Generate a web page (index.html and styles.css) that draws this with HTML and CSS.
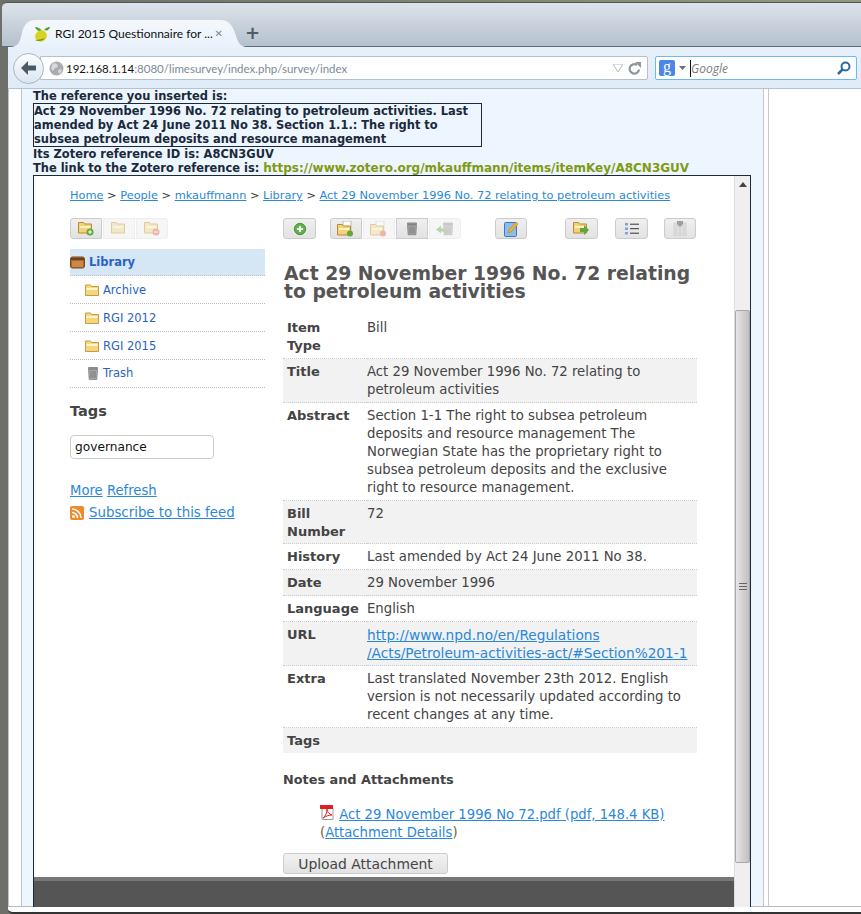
FILE: index.html
```html
<!DOCTYPE html>
<html lang="en">
<head>
    <meta charset="UTF-8">
    <meta name="viewport" content="width=device-width, initial-scale=1.0">
    <title>RGI 2015 Questionnaire</title>
    <link rel="stylesheet" href="styles.css">
</head>
<body>
    <div class="window">
        <!-- Tab strip -->
        <div class="tabstrip">
            <div class="tab">
                <svg class="favicon" width="18" height="18" viewBox="0 0 18 18"><path d="M11 5c3-3 5-3 6-3-1 3-3 4-6 3z" fill="#4f9a1e"/><path d="M9 6C7 3 5 2 2 2c1 3 4 5 7 4z" fill="#5aa626"/><ellipse cx="8" cy="11" rx="6" ry="5.500" transform="rotate(-30 8 11)" fill="#d6d420"/><path d="M2 15c3 2 8 1 10-2-3 1-7 2-10 2z" fill="#6d9a12"/></svg>
                <span class="tab-title">RGI 2015 Questionnaire for ...</span>
                <span class="tab-close">✕</span>
            </div>
            <span class="tab-new">+</span>
        </div>

        <!-- Navigation bar -->
        <div class="navbar">
            <div class="back-btn">
                <svg width="16" height="14" viewBox="0 0 16 14"><path d="M7 0L0 7l7 7V9.500h8v-5H7z" fill="#4c5a68"/></svg>
            </div>
            <div class="urlbar">
                <svg class="globe" width="15" height="15" viewBox="0 0 15 15"><circle cx="7.500" cy="7.500" r="7" fill="#a9adb1"/><path d="M4 2l4 1 1 3-3 1-2 3-2-3zM10 8l3 1-2 4-2-2z" fill="#d7d9db"/></svg>
                <span class="url"><span class="url-host">192.168.1.14</span>:8080/limesurvey/index.php/survey/index</span>
                <svg class="url-drop" width="10" height="8" viewBox="0 0 10 8"><path d="M0 0h10L5 8z" fill="#fff" stroke="#b5bcc4"/></svg>
                <svg class="url-reload" width="13" height="13" viewBox="0 0 13 13"><path d="M11 7.500A4.700 4.700 0 1 1 9 3" fill="none" stroke="#8b969f" stroke-width="2.200"/><path d="M7 0h6v6z" fill="#8b969f"/></svg>
            </div>
            <div class="searchbar">
                <span class="engine">g</span>
                <svg class="engine-drop" width="7" height="4" viewBox="0 0 7 4"><path d="M0 0h7L3.500 4z" fill="#66717c"/></svg>
                <span class="caret"></span>
                <span class="search-hint">Google</span>
                <svg class="search-go" width="14" height="14" viewBox="0 0 14 14"><circle cx="8.500" cy="5.500" r="4" fill="none" stroke="#2f6a9c" stroke-width="2"/><path d="M5.500 8.500L1 13" stroke="#2f6a9c" stroke-width="2.500"/></svg>
            </div>
        </div>

        <div class="viewport">
            <div class="gutter"></div>
            <div class="survey">
                <div class="survey-text">
                    <div>The reference you inserted is:</div>
                    <div class="ref-box">Act 29 November 1996 No. 72 relating to petroleum activities. Last amended by Act 24 June 2011 No 38. Section 1.1.: The right to subsea petroleum deposits and resource management</div>
                    <div>Its Zotero reference ID is: A8CN3GUV</div>
                    <div>The link to the Zotero reference is: <a class="zotero-link" href="#">https://www.zotero.org/mkauffmann/items/itemKey/A8CN3GUV</a></div>
                </div>

                <!-- Embedded Zotero page -->
                <div class="frame">
                    <div class="frame-page">
                        <div class="frame-scroll">
                            <div class="crumbs"><a href="#">Home</a> &gt; <a href="#">People</a> &gt; <a href="#">mkauffmann</a> &gt; <a href="#">Library</a> &gt; <a href="#">Act 29 November 1996 No. 72 relating to petroleum activities</a></div>
                            <div class="columns">
                                <aside class="sidebar">
                                    <div class="btn-group side-tools">
                                        <span class="tool on"><svg width="16" height="15" viewBox="0 0 16 15"><use href="#ico-folder"/><circle cx="12" cy="11" r="3.500" fill="#5ea83c"/><path d="M10 11h4M12 9v4" stroke="#fff"/></svg></span>
                                        <span class="tool faded"><svg width="16" height="15" viewBox="0 0 16 15"><use href="#ico-folder"/></svg></span>
                                        <span class="tool faded"><svg width="16" height="15" viewBox="0 0 16 15"><use href="#ico-folder"/><circle cx="12" cy="11" r="3.500" fill="#d9593f"/><path d="M10 11h4" stroke="#fff"/></svg></span>
                                    </div>
                                    <ul class="collections">
                                        <li class="library"><svg width="15" height="13" viewBox="0 0 15 13"><rect x=".5" y="1" width="14" height="11" rx="2" fill="#a9672b" stroke="#7c4a1d"/><rect x="1" y="2" width="13" height="2" fill="#6d431d"/><rect x="2" y="5" width="11" height="6" fill="#c98a48"/></svg>Library</li>
                                        <li><svg width="14" height="12" viewBox="0 0 14 12"><use href="#ico-folder-s"/></svg>Archive</li>
                                        <li><svg width="14" height="12" viewBox="0 0 14 12"><use href="#ico-folder-s"/></svg>RGI 2012</li>
                                        <li><svg width="14" height="12" viewBox="0 0 14 12"><use href="#ico-folder-s"/></svg>RGI 2015</li>
                                        <li class="trash"><svg width="10" height="14" viewBox="2 0 10 14"><use href="#ico-trash"/></svg>Trash</li>
                                    </ul>
                                    <h3 class="tags-title">Tags</h3>
                                    <input class="tag-input" type="text" value="governance">
                                    <div class="tag-links"><a href="#">More</a> <a href="#">Refresh</a></div>
                                    <div class="feed">
                                        <svg width="14" height="14" viewBox="0 0 14 14"><rect width="14" height="14" rx="2" fill="#f08a2c"/><circle cx="3.500" cy="10.500" r="1.500" fill="#fff"/><path d="M2 6.500a5.500 5.500 0 0 1 5.500 5.500M2 3a9 9 0 0 1 9 9" fill="none" stroke="#fff" stroke-width="1.500"/></svg>
                                        <a href="#">Subscribe to this feed</a>
                                    </div>
                                </aside>

                                <main class="item">
                                    <div class="item-tools">
                                        <span class="tool-solo on"><svg width="14" height="14" viewBox="0 0 16 16"><circle cx="8" cy="8" r="6.500" fill="#62b04a" stroke="#3f8c2d"/><path d="M4.500 8h7M8 4.500v7" stroke="#fff" stroke-width="2"/></svg></span>
                                        <div class="btn-group group-a">
                                            <span class="tool on"><svg width="18" height="16" viewBox="0 0 18 16"><rect x="6" y="0" width="8" height="10" fill="#fff" stroke="#b6bcc4"/><use href="#ico-folder" y="2"/><circle cx="13" cy="12.500" r="3" fill="#5ea83c"/></svg></span>
                                            <span class="tool faded"><svg width="18" height="16" viewBox="0 0 18 16"><rect x="6" y="0" width="8" height="10" fill="#fff" stroke="#b6bcc4"/><use href="#ico-folder" y="2"/><circle cx="13" cy="12.500" r="3" fill="#d9593f"/></svg></span>
                                            <span class="tool on"><svg width="14" height="15" viewBox="0 0 14 14"><use href="#ico-trash"/></svg></span>
                                            <span class="tool faded"><svg width="18" height="15" viewBox="0 0 18 14"><use href="#ico-trash" x="5"/><path d="M0 8l5-4v3c4 0 6 2 6 6-2-3-3-3-6-3v2z" fill="#5ea83c"/></svg></span>
                                        </div>
                                        <span class="tool-solo edit-tool"><svg width="15" height="16" viewBox="0 0 15 16"><rect x=".5" y="1.500" width="12" height="14" rx="1" fill="#8fbdea" stroke="#3b78c4"/><path d="M4 12l1-3 7-8 2 2-7 8z" fill="#f0b43a" stroke="#b67d1c" stroke-width=".6"/></svg></span>
                                        <span class="tool-solo move-tool"><svg width="17" height="15" viewBox="0 0 17 15"><use href="#ico-folder"/><path d="M7 7h4V4l5 5-5 5v-3H7z" fill="#5ea83c"/></svg></span>
                                        <span class="tool-solo list-tool"><svg width="14" height="12" viewBox="0 0 14 12"><g fill="#7fa6dc"><rect width="3" height="2.500"/><rect y="4.500" width="3" height="2.500"/><rect y="9" width="3" height="2.500"/></g><path d="M5 1.200h9M5 5.700h9M5 10.200h9" stroke="#333"/></svg></span>
                                        <span class="tool-solo cite-tool"><svg width="14" height="15" viewBox="0 0 14 15"><path d="M1 2h12v13h-3V5H8v10H6V5H4v10H1z" fill="#d9d9d9" stroke="#bbb" stroke-width=".5"/><path d="M4 0h6v3L7 6 4 3z" fill="#8b8b8b"/></svg></span>
                                    </div>

                                    <h1 class="item-title">Act 29 November 1996 No. 72 relating to petroleum activities</h1>

                                    <table class="fields">
                                        <tr><th>Item<br>Type</th><td>Bill</td></tr>
                                        <tr class="alt"><th>Title</th><td>Act 29 November 1996 No. 72 relating to petroleum activities</td></tr>
                                        <tr><th>Abstract</th><td>Section 1-1 The right to subsea petroleum deposits and resource management The Norwegian State has the proprietary right to subsea petroleum deposits and the exclusive right to resource management.</td></tr>
                                        <tr class="alt tight"><th>Bill Number</th><td>72</td></tr>
                                        <tr><th>History</th><td>Last amended by Act 24 June 2011 No 38.</td></tr>
                                        <tr class="alt"><th>Date</th><td>29 November 1996</td></tr>
                                        <tr><th>Language</th><td>English</td></tr>
                                        <tr class="alt"><th>URL</th><td class="url-cell"><a href="#">http://www.npd.no/en/Regulations<br>/Acts/Petroleum-activities-act/#Section%201-1</a></td></tr>
                                        <tr><th>Extra</th><td>Last translated November 23th 2012. English version is not necessarily updated according to recent changes at any time.</td></tr>
                                        <tr class="alt"><th>Tags</th><td></td></tr>
                                    </table>

                                    <h3 class="notes-title">Notes and Attachments</h3>
                                    <div class="attachment">
                                        <div><svg width="14" height="15" viewBox="0 0 14 15"><path d="M2 .5h8l3 3v11H2z" fill="#fff" stroke="#9a9a9a"/><rect x="0" y="0" width="13" height="4" fill="#e01f26"/><path d="M3 13c3-2 4-6 4-9 0 3 2 5 5 6-3 0-6 1-9 3z" fill="none" stroke="#e01f26"/></svg> <a href="#">Act 29 November 1996 No 72.pdf (pdf, 148.4 KB)</a></div>
                                        <div>(<a href="#">Attachment Details</a>)</div>
                                    </div>
                                    <button class="upload" type="button">Upload Attachment</button>
                                </main>
                            </div>
                        </div>
                        <div class="frame-footer"></div>
                    </div>
                    <div class="scrollbar">
                        <span class="scroll-up"></span>
                        <div class="scroll-thumb"><span class="grip"></span></div>
                    </div>
                </div>
            </div>
            <div class="rightside"></div>
        </div>
        <div class="window-foot"></div>
    </div>

    <!-- Shared icons -->
    <svg class="defs" width="0" height="0">
        <symbol id="ico-folder" viewBox="0 0 16 15" width="16" height="15"><path d="M.5 1.500h5l1 1.500h7v9H.5z" fill="#f3d27a" stroke="#b98d2f"/><rect x="2" y="5" width="10" height="2" fill="#fff3c4"/></symbol>
        <symbol id="ico-folder-s" viewBox="0 0 14 12" width="14" height="12"><path d="M.5 1h5l1 1.500h7v9H.5z" fill="#f5d778" stroke="#c79b4b"/><rect x="1.500" y="4" width="11" height="2" fill="#fff6cf"/></symbol>
        <symbol id="ico-trash" viewBox="0 0 14 14" width="14" height="14"><rect x="2" y="1" width="10" height="2.500" rx="1" fill="#8c8c8c"/><path d="M2.500 3.500h9l-.7 10H3.200z" fill="#a8a8a8" stroke="#777" stroke-width=".7"/><path d="M5 5v7M7 5v7M9 5v7" stroke="#6e6e6e" stroke-width=".8"/></symbol>
    </svg>
</body>
</html>
```
FILE: styles.css
```css
* {
    box-sizing: border-box;
}

html,
body {
    margin: 0;
    padding: 0;
    height: 100%;
    overflow: hidden;
}

body {
    background-color: #8b8f8c;
    font-family: "DejaVu Sans", Verdana, sans-serif;
    color: #333;
}

a {
    color: #2b87d8;
}

.defs {
    display: block;
}

.window {
    height: 914px;
    padding: 2px 0 0 2px;
    background: linear-gradient(90deg, #6d6f68, #8e9a7c);
    display: flex;
    flex-direction: column;
}

/* Tab strip */
.tabstrip {
    height: 45px;
    flex: none;
    padding: 17px 0 0 8px;
    border-top: 1px solid #555;
    border-bottom: 1px solid #5e6a75;
    border-radius: 5px 0 0 0;
    background: linear-gradient(#dde3ea, #b4c1ce);
    display: flex;
    align-items: flex-start;
}

.tab {
    width: 237px;
    height: 27px;
    flex: none;
    display: flex;
    align-items: center;
    padding: 0 24px 0 23px;
    clip-path: path("M0 27 C8 27 10 22 12 13 C14 4 18 0 26 0 L210 0 C218 0 222 4 225 13 C228 22 230 27 237 27 Z");
    background: linear-gradient(#f5f8fb, #e8f2fc);
}

.favicon {
    flex: none;
    margin-right: 4px;
}

.tab-title {
    font-family: Lato, sans-serif;
    font-size: 12px;
    color: #111;
    white-space: nowrap;
    flex: 1;
}

.tab-close {
    font-size: 10px;
    font-weight: bold;
    color: #7f8a94;
}

.tab-new {
    margin-left: -2px;
    font-size: 18px;
    font-weight: bold;
    line-height: 25px;
    color: #4f5b66;
}

/* Navigation bar */
.navbar {
    height: 42px;
    flex: none;
    margin-left: 6px;
    display: flex;
    align-items: center;
    padding: 1px 3px 0 5px;
    border-bottom: 1px solid #b4c3d3;
    background: linear-gradient(#e8f1fa, #dfebf7);
}

.back-btn {
    width: 31px;
    height: 31px;
    flex: none;
    z-index: 1;
    display: flex;
    align-items: center;
    justify-content: center;
    border: 1px solid #a9b6c4;
    border-radius: 50%;
    background: linear-gradient(#fbfdff, #dce6f0);
}

.urlbar {
    width: 608px;
    height: 24px;
    margin-left: -4px;
    padding: 0 6px 0 8px;
    display: flex;
    align-items: center;
    border: 1px solid #b3c0cf;
    border-radius: 0 2px 2px 0;
    background-color: #fff;
}

.globe {
    flex: none;
    margin-right: 2px;
}

.url {
    flex: 1;
    font-family: Lato, sans-serif;
    font-size: 11.500px;
    color: #7d8a97;
    white-space: nowrap;
}

.url-host {
    color: #111;
}

.url-drop {
    margin-right: 5px;
}

.searchbar {
    width: 202px;
    height: 24px;
    margin-left: 7px;
    padding: 0 5px 0 3px;
    display: flex;
    align-items: center;
    border: 1px solid #6fb9f2;
    border-radius: 2px;
    background-color: #fff;
}

.engine {
    width: 16px;
    height: 16px;
    flex: none;
    border-radius: 2px;
    background-color: #4a86e8;
    color: #fff;
    font-family: "Liberation Serif", serif;
    font-size: 16px;
    line-height: 13px;
    text-align: center;
}

.engine-drop {
    margin: 0 4px 0 4px;
}

.caret {
    width: 1px;
    height: 17px;
    background-color: #111;
}

.search-hint {
    flex: 1;
    font-family: "Open Sans", sans-serif;
    font-style: italic;
    font-size: 12px;
    color: #7b7b7b;
}

/* Page area */
.viewport {
    height: 818px;
    flex: none;
    margin-left: 6px;
    display: flex;
    border-bottom: 1px solid #b3bac2;
    background-color: #fff;
}

.gutter {
    width: 14px;
    flex: none;
    border-left: 1px solid #c0c4c8;
    border-right: 1px solid #b9c6d4;
}

.survey {
    width: 742px;
    flex: none;
    padding-left: 11px;
    border-right: 1px solid #c8c8c8;
    background-color: #edf5fe;
}

.rightside {
    width: 5px;
    flex: none;
    border-right: 1px solid #c8c8c8;
}

.window-foot {
    height: 7px;
    flex: none;
    margin-left: 6px;
    border-bottom: 2px solid #333;
    border-radius: 0 0 0 5px;
    background-color: #fff;
}

.survey-text {
    font-size: 11.450px;
    font-weight: bold;
    line-height: 14px;
    color: #1a2a3a;
}

.ref-box {
    width: 449px;
    border: 1px solid #1a2a3a;
}

.zotero-link {
    font-size: 12px;
    color: #7f9a14;
    text-decoration: none;
}

/* Embedded page */
.frame {
    width: 718px;
    height: 732px;
    display: flex;
    border-top: 1px solid #1a2a3a;
    border-left: 1px solid #1a2a3a;
    border-right: 1px solid #1a2a3a;
    background-color: #fff;
}

.frame-page {
    width: 700px;
    flex: none;
    display: flex;
    flex-direction: column;
}

.frame-scroll {
    flex: 1;
    min-height: 0;
    padding: 12px 36px 0 36px;
    overflow: hidden;
}

.frame-footer {
    height: 30px;
    flex: none;
    border-top: 4px solid #777;
    background-color: #555;
}

.scrollbar {
    flex: 1;
    position: relative;
    background-color: #efefef;
    border-left: 1px solid #ddd;
}

.scroll-up {
    position: absolute;
    top: 6px;
    left: 4px;
    width: 0;
    height: 0;
    border-left: 4px solid transparent;
    border-right: 4px solid transparent;
    border-bottom: 5px solid #444;
}

.scroll-thumb {
    position: absolute;
    top: 134px;
    left: 0;
    right: 0;
    height: 553px;
    display: flex;
    align-items: center;
    justify-content: center;
    border: 1px solid #a8a8a8;
    border-radius: 2px;
    background: linear-gradient(90deg, #e6e6e6, #c0c0c0);
}

.grip {
    width: 8px;
    height: 7px;
    border-top: 1px solid #666;
    border-bottom: 1px solid #666;
    background: linear-gradient(#666, #666) center / 100% 1px no-repeat;
}

.crumbs {
    font-size: 11.350px;
    line-height: 14px;
    color: #333;
    white-space: nowrap;
}

.columns {
    display: flex;
    margin-top: 16px;
}

/* Sidebar */
.sidebar {
    width: 195px;
    flex: none;
    margin-right: 18px;
    font-size: 11.500px;
}

.btn-group {
    display: flex;
    gap: 1px;
}

.tool,
.tool-solo {
    height: 21px;
    display: flex;
    align-items: center;
    justify-content: center;
    border: 1px solid #ddd;
    background: linear-gradient(#efefef, #e2e2e2);
}

.tool {
    width: 32px;
}

.tool.on {
    border-color: #ccc;
}

.tool.faded {
    background: #f6f6f6;
    border-color: #eee;
}

.tool.faded svg {
    opacity: .4;
}

.btn-group .tool:first-child {
    border-radius: 3px 0 0 3px;
}

.btn-group .tool:last-child {
    border-radius: 0 3px 3px 0;
}

.collections {
    list-style: none;
    margin: 10px 0 0;
    padding: 0;
}

.collections li {
    height: 28px;
    display: flex;
    align-items: center;
    gap: 4px;
    padding-left: 15px;
    color: #2a62c4;
    border-bottom: 1px dotted #bbb;
}

.collections .library {
    height: 27px;
    padding-left: 0;
    background-color: #d5e6f5;
    font-weight: bold;
}

.collections .trash {
    padding-left: 18px;
    gap: 5px;
    padding-bottom: 2px;
}

.tags-title {
    margin: 14px 0 0;
    font-size: 14.500px;
    line-height: 18px;
    color: #444;
}

.tag-input {
    display: block;
    width: 144px;
    height: 24px;
    margin-top: 15px;
    padding: 0 4px;
    border: 1px solid #ccc;
    border-radius: 4px;
    font-family: "DejaVu Sans", sans-serif;
    font-size: 12.200px;
    color: #111;
}

.tag-links {
    margin-top: 23px;
    font-size: 13.200px;
    line-height: 18px;
}

.feed {
    display: flex;
    align-items: center;
    gap: 5px;
    margin-top: 4px;
    font-size: 13.350px;
    line-height: 18px;
}

/* Item pane */
.item {
    width: 414px;
    flex: none;
}

.item-tools {
    display: flex;
    align-items: center;
    height: 21px;
}

.tool-solo {
    width: 33px;
    border-radius: 3px;
    border-color: #ccc;
}

.group-a {
    margin-left: 14px;
}

.edit-tool {
    margin-left: 34px;
    width: 32px;
}

.move-tool {
    margin-left: 38px;
}

.list-tool {
    margin-left: 17px;
}

.cite-tool {
    margin-left: 16px;
    width: 32px;
}

.cite-tool svg {
    opacity: .8;
}

.item-title {
    margin: 26px 0 14px;
    padding-left: 1px;
    font-size: 18.800px;
    line-height: 18px;
    color: #555;
}

.fields {
    width: 414px;
    border-collapse: collapse;
    table-layout: fixed;
    font-size: 13.250px;
    line-height: 18px;
}

.fields th {
    width: 84px;
    padding: 4px 4px 3px;
    font-size: 13px;
    text-align: left;
    vertical-align: top;
    color: #444;
}

.fields td {
    padding: 4px 4px 3px 0;
    vertical-align: top;
    color: #444;
}

.fields td.url-cell {
    font-size: 13.700px;
}

.fields tr {
    border-bottom: 1px dotted #ccc;
}

.fields tr:last-child {
    border-bottom: 0;
}

.fields .alt {
    background-color: #f2f2f2;
}

.fields .tight th,
.fields .tight td {
    padding-bottom: 2px;
}

.notes-title {
    margin: 18px 0 0;
    font-size: 12.850px;
    line-height: 18px;
    color: #444;
}

.attachment {
    margin: 16px 0 0 37px;
    font-size: 13.200px;
    line-height: 18px;
    color: #7a5a2a;
}

.attachment svg {
    margin-right: 1px;
    vertical-align: -1px;
}

.upload {
    display: block;
    width: 165px;
    height: 21px;
    margin-top: 11px;
    padding: 0;
    border: 1px solid #ccc;
    border-radius: 3px;
    background: linear-gradient(#f2f2f2, #e2e2e2);
    font-family: "DejaVu Sans", sans-serif;
    font-size: 13.900px;
    color: #444;
}
```
